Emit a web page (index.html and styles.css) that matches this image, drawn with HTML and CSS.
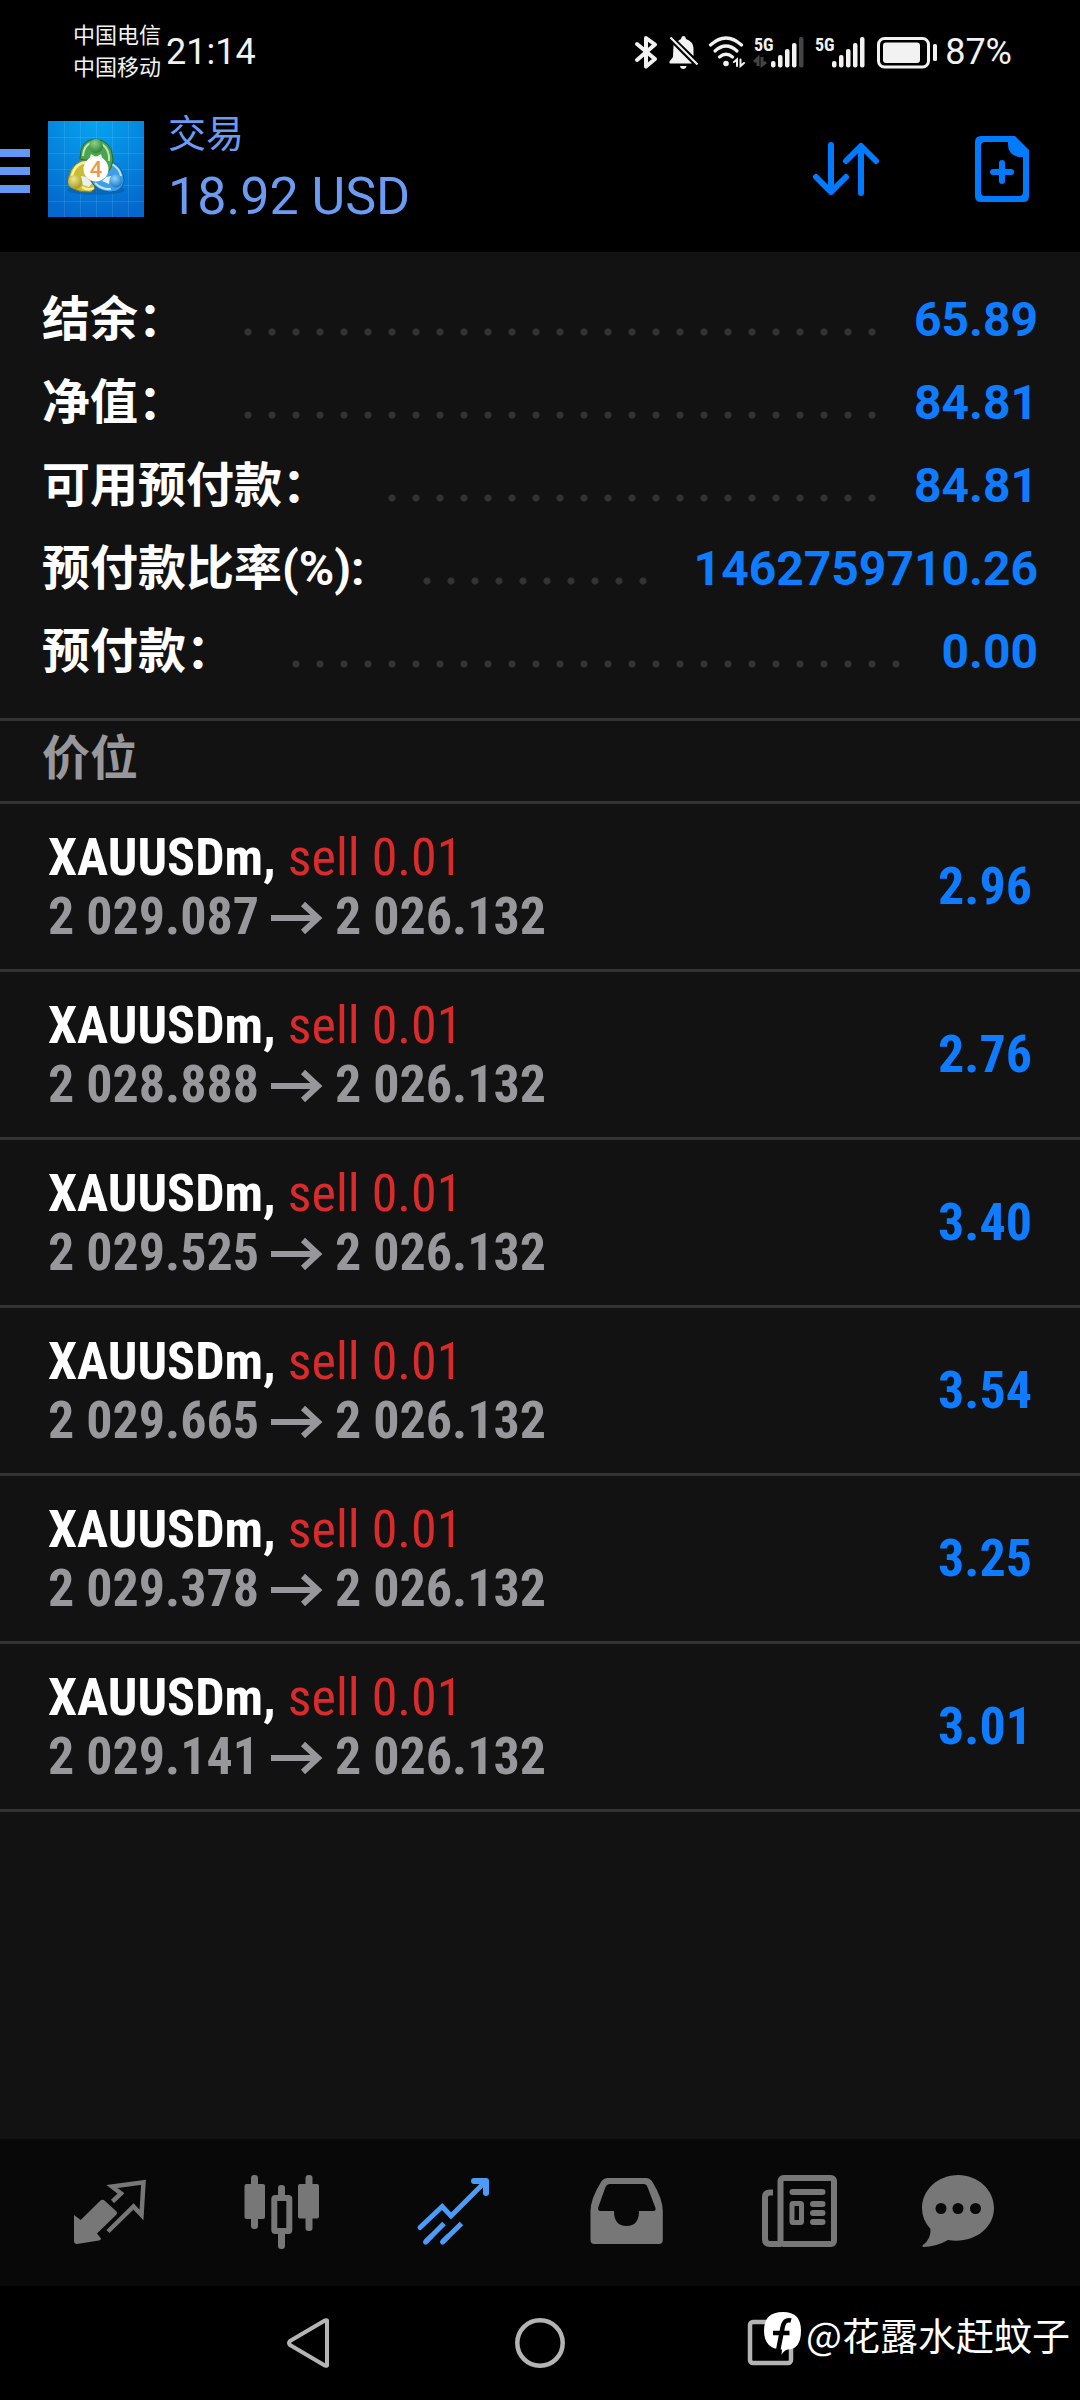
FILE: index.html
```html
<!DOCTYPE html>
<html lang="zh-CN">
<head>
    <meta charset="UTF-8">
    <meta name="viewport" content="width=device-width, initial-scale=1">
    <title>交易</title>
    <link rel="stylesheet" href="styles.css">
</head>
<body>
    <!-- shared icon shapes -->
    <svg class="sprite" width="0" height="0" aria-hidden="true">
        <symbol id="arrow" viewBox="0 0 52 32">
            <path d="M0 16 H47 M32 2 L47 16 L32 30" fill="none" stroke="currentColor" stroke-width="6"/>
        </symbol>
    </svg>

    <!-- === STATUS BAR === -->
    <div class="statusbar">
        <div class="carriers">
            <span>中国电信</span>
            <span>中国移动</span>
        </div>
        <span class="clock">21:14</span>
        <div class="status-icons">
            <svg width="26" height="36" viewBox="0 0 26 36" fill="none" stroke="#f2f2f2" stroke-width="4" stroke-linejoin="round" stroke-linecap="round">
                <path d="M3 10 L21 25 L12 32.500 V4 L21 10.500 L3 26"/>
            </svg>
            <svg width="32" height="36" viewBox="0 0 32 36" fill="#f2f2f2">
                <path d="M10 7 Q12 5.500 13 5 Q13.500 2 15.500 2 Q17.500 2 18 5 Q25 7.500 25.500 14 V22 Z"/>
                <path d="M5.500 11 L24 29.500 H2 Q1 29 1.500 27.500 L5 23 Z"/>
                <path d="M12 32 H18.500 Q18 35 15.200 35 Q12.500 35 12 32 Z"/>
                <path d="M2.500 3.500 L29.500 30.500" stroke="#f2f2f2" stroke-width="2.200"/>
            </svg>
            <svg width="37" height="36" viewBox="0 0 37 36" fill="none" stroke="#f2f2f2" stroke-width="3.200" stroke-linecap="round">
                <path d="M2.500 11 Q18 -3 33.500 11"/>
                <path d="M7 17 Q18 7 29 17"/>
                <path d="M11.500 23 Q18 17.500 24.500 23"/>
                <circle cx="18" cy="29.500" r="2.800" fill="#f2f2f2" stroke="none"/>
                <path d="M26 28 L29 25.500 V32 M32.500 25.500 V32 L36 29" stroke-width="2"/>
            </svg>
            <svg width="53" height="36" viewBox="0 0 53 36" fill="#f2f2f2">
                <text class="net" x="1" y="17">5G</text>
                <path d="M1 28 L5 24 V32 M9 23 V31 L13 28" fill="none" stroke="#444" stroke-width="3"/>
                <rect x="18" y="27" width="4.500" height="6.500" rx="2"/>
                <rect x="25" y="21" width="4.500" height="12.500" rx="2"/>
                <rect x="32" y="15" width="4.500" height="18.500" rx="2"/>
                <rect x="39" y="9" width="4.500" height="24.500" rx="2"/>
                <rect x="46" y="3" width="4.500" height="30.500" rx="2" fill="#444"/>
            </svg>
            <svg width="55" height="36" viewBox="0 0 55 36" fill="#f2f2f2">
                <text class="net" x="1" y="17">5G</text>
                <rect x="18" y="27" width="4.500" height="6.500" rx="2"/>
                <rect x="25" y="21" width="4.500" height="12.500" rx="2"/>
                <rect x="32" y="15" width="4.500" height="18.500" rx="2"/>
                <rect x="39" y="9" width="4.500" height="24.500" rx="2"/>
                <rect x="46" y="3" width="4.500" height="30.500" rx="2"/>
            </svg>
            <svg width="60" height="36" viewBox="0 0 60 36" fill="#f2f2f2">
                <rect x="1.500" y="4.500" width="50" height="28.500" rx="6" fill="none" stroke="#f2f2f2" stroke-width="3"/>
                <rect x="6" y="8.500" width="37" height="20.500" rx="3"/>
                <rect x="56" y="10" width="4" height="17" rx="1.500"/>
            </svg>
            <span class="battery">87%</span>
        </div>
    </div>

    <!-- === APP BAR === -->
    <header class="appbar">
        <button class="menu-btn" aria-label="菜单">
            <svg width="30" height="48" viewBox="0 0 30 48" fill="#6399f5">
                <rect y="4" width="30" height="8"/>
                <rect y="22" width="30" height="8"/>
                <rect y="40" width="30" height="8"/>
            </svg>
        </button>
        <svg class="logo" width="96" height="96" viewBox="0 0 96 96">
            <defs>
                <radialGradient id="sky" cx="50%" cy="0%" r="100%">
                    <stop offset="0" stop-color="#06a4f0"/>
                    <stop offset="1" stop-color="#0468cc"/>
                </radialGradient>
                <radialGradient id="green" cx="40%" cy="30%" r="80%">
                    <stop offset="0" stop-color="#8fd08a"/>
                    <stop offset="1" stop-color="#1f7a2c"/>
                </radialGradient>
                <radialGradient id="yellow" cx="40%" cy="30%" r="80%">
                    <stop offset="0" stop-color="#f0e88a"/>
                    <stop offset="1" stop-color="#9c8f14"/>
                </radialGradient>
                <radialGradient id="blue" cx="40%" cy="30%" r="80%">
                    <stop offset="0" stop-color="#8fd4fb"/>
                    <stop offset="1" stop-color="#0b6fc0"/>
                </radialGradient>
            </defs>
            <rect width="96" height="96" fill="url(#sky)"/>
            <path d="M0 16.500 H96 M0 32.500 H96 M0 48.500 H96 M0 64.500 H96 M0 80.500 H96 M16.500 0 V96 M32.500 0 V96 M48.500 0 V96 M64.500 0 V96 M80.500 0 V96" stroke="#fff" stroke-opacity="0.1"/>
            <ellipse cx="48" cy="69" rx="29" ry="5" fill="#034f9c" opacity="0.4"/>
            <!-- yellow figure -->
            <path d="M43 38 Q24 38 20 58 Q21 72 43 71 Q50 66 44 58 Z" fill="#c9bc35" stroke="#7f7718"/>
            <path d="M42 41 Q27 41 24 55 M34 66 Q40 70 46 67" fill="none" stroke="#f6f0a0" stroke-width="2.500"/>
            <path d="M33 55 L38 56 L44 62 L41 66 L35 64 Z" fill="#e9f0ee"/>
            <!-- blue figure -->
            <path d="M62 40 Q76 46 76 60 Q74 71 62 71 Q48 70 43 60 L56 58 Z" fill="#3f9fe6" stroke="#135c9e"/>
            <path d="M64 43 Q72 48 73 55 M47 62 Q54 69 63 68" fill="none" stroke="#bfe5ff" stroke-width="2"/>
            <path d="M58 56 L63 55 L61 63 L54 60 Z" fill="#e4f0f8"/>
            <!-- green figure -->
            <path d="M32 38 Q32 18 48 18 Q64 20 65 38 Q64 48 58 53 L55 40 L36 39 Z" fill="#4ca350" stroke="#226b2b"/>
            <path d="M35 35 Q36 24 43 22 M54 23 Q62 29 61 40" fill="none" stroke="#c0e6b8" stroke-width="2"/>
            <path d="M43 33 L48 36 L53 33 L55 39 H41 Z" fill="#e6f2e4"/>
            <circle cx="48" cy="25" r="7" fill="url(#green)"/>
            <circle cx="27" cy="61" r="7" fill="url(#yellow)"/>
            <circle cx="68" cy="60" r="6.500" fill="url(#blue)"/>
            <circle cx="48" cy="48" r="12.500" fill="#fff"/>
            <text class="logo-num" x="48" y="56" text-anchor="middle">4</text>
        </svg>
        <div class="titles">
            <h1 class="title">交易</h1>
            <span class="amount">18.92 USD</span>
        </div>
        <div class="actions">
            <button aria-label="排序">
                <svg width="66" height="66" viewBox="0 0 66 66" fill="none" stroke="#007aff" stroke-width="6" stroke-linecap="round" stroke-linejoin="round">
                    <path d="M18 9 V56 M3 41 L18 56 L33 41"/>
                    <path d="M48 57 V10 M33 25 L48 10 L63 25"/>
                </svg>
            </button>
            <button aria-label="新订单">
                <svg width="54" height="66" viewBox="0 0 54 66" fill="#007aff">
                    <path fill-rule="evenodd" d="M6 0 H40 L54 14 V60 Q54 66 48 66 H6 Q0 66 0 60 V6 Q0 0 6 0 Z M10 6 Q6 6 6 10 V56 Q6 60 10 60 H44 Q48 60 48 56 V21 H43 Q33 18 33 9 V6 Z"/>
                    <path d="M18 36 H36 M27 27 V45" stroke="#007aff" stroke-width="6" stroke-linecap="round"/>
                </svg>
            </button>
        </div>
    </header>

    <main class="content">
        <!-- === ACCOUNT SUMMARY === -->
        <dl class="summary">
            <div class="summary-row"><dt>结余：</dt><dd>65.89</dd></div>
            <div class="summary-row"><dt>净值：</dt><dd>84.81</dd></div>
            <div class="summary-row"><dt>可用预付款：</dt><dd>84.81</dd></div>
            <div class="summary-row"><dt>预付款比率(%):</dt><dd>1462759710.26</dd></div>
            <div class="summary-row"><dt>预付款：</dt><dd>0.00</dd></div>
        </dl>

        <!-- === POSITIONS === -->
        <h2 class="section-title">价位</h2>
        <ul class="positions">
            <li class="position">
                <div>
                    <p class="symbol">XAUUSDm, <span class="sell">sell 0.01</span></p>
                    <p class="prices">2 029.087 <svg class="arrow"><use href="#arrow"/></svg> 2 026.132</p>
                </div>
                <span class="profit">2.96</span>
            </li>
            <li class="position">
                <div>
                    <p class="symbol">XAUUSDm, <span class="sell">sell 0.01</span></p>
                    <p class="prices">2 028.888 <svg class="arrow"><use href="#arrow"/></svg> 2 026.132</p>
                </div>
                <span class="profit">2.76</span>
            </li>
            <li class="position">
                <div>
                    <p class="symbol">XAUUSDm, <span class="sell">sell 0.01</span></p>
                    <p class="prices">2 029.525 <svg class="arrow"><use href="#arrow"/></svg> 2 026.132</p>
                </div>
                <span class="profit">3.40</span>
            </li>
            <li class="position">
                <div>
                    <p class="symbol">XAUUSDm, <span class="sell">sell 0.01</span></p>
                    <p class="prices">2 029.665 <svg class="arrow"><use href="#arrow"/></svg> 2 026.132</p>
                </div>
                <span class="profit">3.54</span>
            </li>
            <li class="position">
                <div>
                    <p class="symbol">XAUUSDm, <span class="sell">sell 0.01</span></p>
                    <p class="prices">2 029.378 <svg class="arrow"><use href="#arrow"/></svg> 2 026.132</p>
                </div>
                <span class="profit">3.25</span>
            </li>
            <li class="position">
                <div>
                    <p class="symbol">XAUUSDm, <span class="sell">sell 0.01</span></p>
                    <p class="prices">2 029.141 <svg class="arrow"><use href="#arrow"/></svg> 2 026.132</p>
                </div>
                <span class="profit">3.01</span>
            </li>
        </ul>
    </main>

    <!-- === TABS === -->
    <nav class="tabs">
        <a href="#quotes" class="tab" aria-label="行情">
            <svg width="108" height="147" viewBox="0 0 108 147">
                <path d="M18 76 L24.700 81 L44 62 Q46.400 59.500 49 62 L60 72 Q62 74 60 76 L41 94.500 L45 99.500 Q45 101 43 101.500 L21 105 Q18 105 18 102 Z" fill="currentColor"/>
                <path d="M56.500 62.500 L65 54.500 L56 47.500 L87.500 43.300 L85.500 76 L77.500 67.500 L52 92.500" fill="none" stroke="currentColor" stroke-width="4.500"/>
            </svg>
        </a>
        <a href="#chart" class="tab" aria-label="图表">
            <svg width="108" height="147" viewBox="0 0 108 147" fill="currentColor">
                <rect x="22" y="36" width="7" height="54" rx="3"/>
                <rect x="15.500" y="45" width="20.500" height="35" rx="2"/>
                <rect x="49" y="46" width="7" height="12" rx="3"/>
                <rect x="49" y="92" width="7" height="18" rx="3"/>
                <rect x="45.300" y="59" width="15" height="33" rx="1" fill="none" stroke="currentColor" stroke-width="6"/>
                <rect x="76.500" y="36" width="7" height="56" rx="3"/>
                <rect x="69" y="45" width="21" height="34.500" rx="2"/>
            </svg>
        </a>
        <a href="#trade" class="tab tab-active" aria-label="交易">
            <svg width="108" height="147" viewBox="0 0 108 147" fill="none" stroke="currentColor" stroke-width="5">
                <path d="M19 88.500 L41.200 67.500 L50 77 L85 42" stroke-linecap="round"/>
                <path d="M73 42 H85 V54" stroke-width="6" stroke-linecap="round" stroke-linejoin="round"/>
                <path d="M24.500 103 L43 84.500 M41.500 103 L60.500 84.500"/>
                <path d="M24.500 103 L30 97.500 M41.500 103 L47 97.500" stroke-linecap="round"/>
            </svg>
        </a>
        <a href="#history" class="tab" aria-label="历史">
            <svg width="108" height="147" viewBox="0 0 108 147" fill="currentColor">
                <path fill-rule="evenodd" d="M34 39 H72 Q76 39 78.500 43 Q88.800 60 88.800 72 V101 Q88.800 105 85 105 H20.500 Q16.500 105 16.500 101 V72 Q16.500 60 27 43 Q29.500 39 34 39 Z M36 45 Q33 45 31.500 48 L24 69 Q24 72 26 72 H40 Q40 87 52.500 87 Q65 87 65 72 H79.500 Q82 72 81.500 69 L73.500 48 Q72.500 45 69.500 45 Z"/>
            </svg>
        </a>
        <a href="#news" class="tab" aria-label="新闻">
            <svg width="108" height="147" viewBox="0 0 108 147" fill="currentColor">
                <rect x="34.500" y="39" width="53.500" height="66" rx="3" fill="none" stroke="currentColor" stroke-width="6"/>
                <path d="M27 53.500 H24 Q19 53.500 19 58 V100 Q19 105 24 105 H35" fill="none" stroke="currentColor" stroke-width="6"/>
                <rect x="43.500" y="50" width="36" height="6" rx="3"/>
                <rect x="46" y="64.500" width="9.500" height="19" rx="1" fill="none" stroke="currentColor" stroke-width="5"/>
                <rect x="64" y="62" width="15.500" height="6" rx="3"/>
                <rect x="64" y="71" width="15.500" height="6" rx="3"/>
                <rect x="64" y="80" width="15.500" height="6" rx="3"/>
            </svg>
        </a>
        <a href="#messages" class="tab" aria-label="消息">
            <svg width="108" height="147" viewBox="0 0 108 147" fill="currentColor">
                <path d="M39 36 C59 36 75 51 75 69 C75 90 54 105 29 101 Q17 108 4 108 Q2.500 107 4 106 Q12 100 11.500 90 Q3 81 3 69 C3 51 19 36 39 36 Z"/>
                <g fill="#080808">
                    <circle cx="22" cy="69.500" r="5.500"/>
                    <circle cx="39" cy="69.500" r="5.500"/>
                    <circle cx="56.500" cy="69.500" r="5.500"/>
                </g>
            </svg>
        </a>
    </nav>

    <!-- === SYSTEM NAVIGATION === -->
    <div class="sysnav">
        <button aria-label="返回">
            <svg width="52" height="52" viewBox="0 0 52 52" fill="none" stroke="#b4b4b4" stroke-width="4" stroke-linejoin="round">
                <path d="M44 3.500 V48.500 Q42.500 49 41 48 L7 28 Q5 26 7 24 L41 4 Q42.500 3 44 3.500 Z"/>
            </svg>
        </button>
        <button aria-label="主页">
            <svg width="52" height="52" viewBox="0 0 52 52" fill="none" stroke="#b4b4b4" stroke-width="4.500">
                <circle cx="26" cy="26" r="22.700"/>
            </svg>
        </button>
        <button aria-label="最近任务">
            <svg width="52" height="52" viewBox="0 0 52 52" fill="none" stroke="#b4b4b4" stroke-width="4.500">
                <rect x="5" y="5" width="41" height="41" rx="3"/>
            </svg>
        </button>
        <div class="watermark">
            <svg width="38" height="44" viewBox="0 0 38 44">
                <path d="M19 0 Q37 0 37 18.500 Q37 37 24 37.500 Q20 38 17.500 43 L18 37.500 Q0 37 0 18.500 Q0 0 19 0 Z" fill="#fff"/>
                <path d="M27 8.500 Q20 6.500 18.500 16 L14 39 M9 21 H25.500" fill="none" stroke="#000" stroke-width="4.500"/>
            </svg>
            <span>@花露水赶蚊子</span>
        </div>
    </div>
</body>
</html>
```
FILE: styles.css
```css
/* === BASE STYLES === */
* {
    margin: 0;
    padding: 0;
    box-sizing: border-box;
}

body {
    display: flex;
    flex-direction: column;
    min-height: 100vh;
    font-family: Roboto, 'Noto Sans CJK SC', sans-serif;
    background: #000;
    color: #fff;
}

button {
    background: none;
    border: none;
    cursor: pointer;
}

svg {
    display: block;
}

.sprite {
    position: absolute;
}

/* === STATUS BAR === */
.statusbar {
    display: flex;
    align-items: center;
    height: 104px;
    padding: 0 68px 0 73px;
    color: #f2f2f2;
}

.carriers {
    display: flex;
    flex-direction: column;
    font-size: 22px;
    line-height: 32px;
}

.clock {
    margin-left: 5px;
    font-size: 36px;
}

.status-icons {
    display: flex;
    align-items: center;
    gap: 8px;
    margin-left: auto;
}

.net {
    font-family: 'Roboto Condensed', 'Liberation Sans Narrow', sans-serif;
    font-size: 18px;
    font-weight: 700;
}

.battery {
    font-size: 36px;
}

/* === APP BAR === */
.appbar {
    display: flex;
    align-items: center;
    padding: 6px 51px 25px 0;
}

.menu-btn {
    margin-right: 18px;
}

.logo-num {
    font-size: 22px;
    font-weight: 500;
    fill: #f0964a;
}

.titles {
    display: flex;
    flex-direction: column;
    gap: 9px;
    margin-left: 24px;
    color: #6b9bf2;
}

.title {
    font-size: 38px;
    font-weight: 400;
    line-height: 48px;
}

.amount {
    font-size: 52px;
    line-height: 60px;
}

.actions {
    display: flex;
    gap: 96px;
    margin-left: auto;
}

/* === CONTENT === */
.content {
    flex: 1;
    background: #121212;
}

.summary {
    padding: 26px 42px 25px;
}

.summary-row {
    display: flex;
    align-items: center;
    height: 83px;
    font-size: 48px;
    font-weight: 700;
    line-height: 56px;
}

.summary-row dt {
    display: flex;
    flex: 1;
    white-space: nowrap;
}

/* dotted leader between label and value */
.summary-row dt::after {
    content: '';
    flex: 1;
    height: 24px;
    margin: 28px 34px 0 50px;
    background: radial-gradient(circle, #333 3px, transparent 4px) left center / 24px 24px repeat-x;
}

.summary-row dd {
    color: #0f7bff;
}

.section-title {
    padding: 0 42px 4px;
    border-top: 3px solid #333;
    border-bottom: 3px solid #333;
    color: #98989c;
    font-size: 48px;
    font-weight: 700;
    line-height: 76px;
}

/* === POSITIONS === */
.positions {
    list-style: none;
    font-family: 'Roboto Condensed', 'Liberation Sans Narrow', sans-serif;
    font-size: 52px;
    font-weight: 700;
}

.position {
    display: flex;
    align-items: center;
    justify-content: space-between;
    height: 168px;
    padding: 0 48px;
    border-bottom: 3px solid #333;
    line-height: 59px;
}

.sell {
    color: #d92b2b;
    font-weight: 400;
}

.prices {
    color: #98989c;
}

.arrow {
    display: inline-block;
    width: 52px;
    height: 32px;
}

.profit {
    color: #0f7bff;
}

/* === TABS === */
.tabs {
    display: flex;
    padding: 0 21px 0 24px;
    background: #080808;
}

.tab {
    display: flex;
    flex: 1;
    justify-content: center;
    color: #777;
}

.tab-active {
    color: #4a9cf8;
}

/* === SYSTEM NAVIGATION === */
.sysnav {
    position: relative;
    display: flex;
    justify-content: center;
    height: 114px;
    gap: 179px;
}

.watermark {
    position: absolute;
    right: 10px;
    top: 20px;
    display: flex;
    align-items: center;
    gap: 4px;
    font-family: 'Noto Sans CJK SC', sans-serif;
    font-size: 38px;
}
```
